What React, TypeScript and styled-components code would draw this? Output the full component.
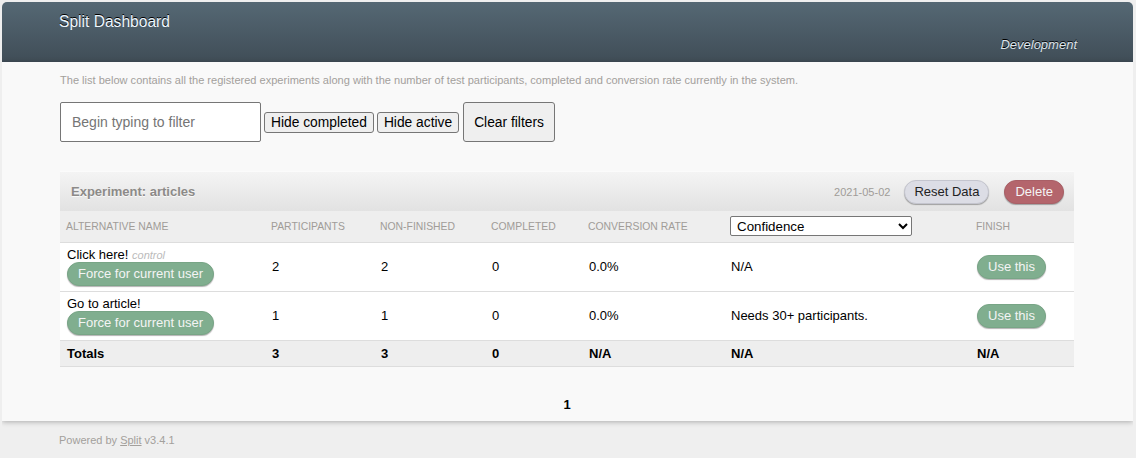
import React from "react";
import styled, { createGlobalStyle } from "styled-components";

const Global = createGlobalStyle`
  html { background: #efefef; }
  body {
    margin: 2px 3px 0 2px;
    font: 13px "Liberation Sans", Arial, sans-serif;
    color: #000;
  }
  * { box-sizing: border-box; }
`;

const Header = styled.div`
  height: 60px;
  padding: 0 56px 0 57px;
  display: flex;
  justify-content: space-between;
  align-items: flex-start;
  background: linear-gradient(to bottom, #556874 0%, #404d57 100%);
  border-radius: 5px 5px 0 0;
`;

const Title = styled.h1`
  margin: 0;
  color: #edf7ff;
  font-size: 15.6px;
  font-weight: normal;
  line-height: 40px;
  text-shadow: 0 -1px 0 #000;
`;

const Environment = styled.div`
  margin-top: 35px;
  color: #dfe7ee;
  font-size: 13px;
  font-style: italic;
  line-height: 16px;
  text-shadow: 0 -1px 0 #000;
`;

const Main = styled.div`
  background: #f9f9f9;
  padding: 0 59px 8px 58px;
  box-shadow: 0 1px 5px rgba(0, 0, 0, 0.28);
`;

const Intro = styled.p`
  margin: 0;
  padding-top: 12px;
  font-size: 11.05px;
  line-height: 13px;
  color: #a3a09c;
`;

const Filters = styled.div`
  margin-top: 15px;
  display: flex;
  align-items: center;
  gap: 3px;
`;

const FilterInput = styled.input`
  width: 201px;
  height: 40px;
  padding: 0 11px;
  border: 1px solid #767676;
  border-radius: 2px;
  font: 14px "Liberation Sans", Arial, sans-serif;
  background: #fff;
  &::placeholder { color: #757575; }
`;

const FormButton = styled.button<{ $tall?: boolean }>`
  height: ${(p) => (p.$tall ? "40px" : "21px")};
  padding: ${(p) => (p.$tall ? "0 10px" : "0 6px")};
  margin-left: ${(p) => (p.$tall ? "1px" : "0")};
  font: 13.8px "Liberation Sans", Arial, sans-serif;
  color: #000;
  background: #efefef;
  border: 1px solid #767676;
  border-radius: 3px;
`;

const Experiment = styled.div`
  margin: 29px 0 30px;
  background: #fff;
  border-top: 1px solid #fbfbfb;
`;

const ExpHeader = styled.div`
  display: flex;
  align-items: center;
  padding: 0 10px 0 11px;
  background: linear-gradient(to bottom, #f4f4f4 0%, #e2e2e2 100%);
`;

const ExpTitle = styled.h2`
  margin: 12px 0;
  flex: 1;
  font-size: 13px;
  line-height: 15px;
  font-weight: bold;
  color: #8c8a88;
  text-shadow: 0 1px 0 rgba(255, 255, 255, 0.8);
`;

const DateText = styled.span`
  font-size: 11px;
  color: #a09c98;
  margin-right: 14px;
`;

const Pill = styled.button<{ $kind: "green" | "gray" | "red" }>`
  display: inline-block;
  padding: ${(p) => (p.$kind === "gray" ? "4px 9px" : "4px 10px")};
  font: 13px/14px "Liberation Sans", Arial, sans-serif;
  border-radius: 12px;
  box-shadow: 0 1px 1px rgba(0, 0, 0, 0.3);
  color: ${(p) => (p.$kind === "gray" ? "#222" : "#f4f4f4")};
  background: ${(p) =>
    p.$kind === "green" ? "#80ae8f" : p.$kind === "red" ? "#b4656c" : "#dcdde5"};
  border: 1px solid
    ${(p) => (p.$kind === "green" ? "#78a586" : p.$kind === "red" ? "#a95f66" : "#c4c5ce")};
  & + & { margin-left: 15px; }
`;

const Table = styled.table`
  width: 100%;
  border-collapse: collapse;
  table-layout: fixed;
`;

const Th = styled.th`
  padding: 0 6px;
  height: 31px;
  text-align: left;
  font-weight: normal;
  font-size: 10.4px;
  text-transform: uppercase;
  color: #a09c98;
  background: #eee;
  border-bottom: 1px solid #ddd;
`;

const Td = styled.td`
  padding: 5px 6px 5px 7px;
  vertical-align: middle;
  line-height: 15px;
  border-bottom: 1px solid #ddd;
`;

const TotalTd = styled.td`
  padding: 5px 6px 5px 7px;
  line-height: 15px;
  font-weight: bold;
  background: #eee;
  border-bottom: 1px solid #ddd;
`;

const Name = styled.div`
  line-height: 14px;
`;

const Control = styled.span`
  font-size: 11px;
  font-style: italic;
  color: #bbb;
`;

const Select = styled.select`
  width: 182px;
  height: 20px;
  font: 13.33px "Liberation Sans", Arial, sans-serif;
  color: #000;
  background: #fff;
  border: 1px solid #767676;
  border-radius: 2px;
  padding: 0 2px;
`;

const Pagination = styled.div`
  text-align: center;
  font-weight: bold;
  line-height: 16px;
`;

const Footer = styled.p`
  margin: 12px 0 0;
  padding-left: 57px;
  font-size: 11px;
  line-height: 14px;
  color: #a3a09c;
  a { color: #a3a09c; }
`;

const cols = [205, 109, 111, 97, 142, 246, 104];

const rows = [
  { name: "Click here!", control: true, p: 2, nf: 2, c: 0, conv: "0.0%", conf: "N/A" },
  { name: "Go to article!", control: false, p: 1, nf: 1, c: 0, conv: "0.0%", conf: "Needs 30+ participants." },
];

export default function App() {
  return (
    <>
      <Global />
      <Header>
        <Title>Split Dashboard</Title>
        <Environment>Development</Environment>
      </Header>
      <Main>
        <Intro>
          The list below contains all the registered experiments along with the number of test
          participants, completed and conversion rate currently in the system.
        </Intro>
        <Filters>
          <FilterInput placeholder="Begin typing to filter" />
          <FormButton>Hide completed</FormButton>
          <FormButton>Hide active</FormButton>
          <FormButton $tall>Clear filters</FormButton>
        </Filters>
        <Experiment>
          <ExpHeader>
            <ExpTitle>Experiment: articles</ExpTitle>
            <DateText>2021-05-02</DateText>
            <Pill $kind="gray">Reset Data</Pill>
            <Pill $kind="red">Delete</Pill>
          </ExpHeader>
          <Table>
            <colgroup>
              {cols.map((w, i) => (
                <col key={i} style={{ width: w }} />
              ))}
            </colgroup>
            <thead>
              <tr>
                <Th>Alternative Name</Th>
                <Th>Participants</Th>
                <Th>Non-finished</Th>
                <Th>Completed</Th>
                <Th>Conversion Rate</Th>
                <Th>
                  <Select defaultValue="c">
                    <option value="c">Confidence</option>
                  </Select>
                </Th>
                <Th>Finish</Th>
              </tr>
            </thead>
            <tbody>
              {rows.map((r) => (
                <tr key={r.name}>
                  <Td>
                    <Name>
                      {r.name} {r.control && <Control>control</Control>}
                    </Name>
                    <Pill $kind="green">Force for current user</Pill>
                  </Td>
                  <Td>{r.p}</Td>
                  <Td>{r.nf}</Td>
                  <Td>{r.c}</Td>
                  <Td>{r.conv}</Td>
                  <Td>{r.conf}</Td>
                  <Td>
                    <Pill $kind="green">Use this</Pill>
                  </Td>
                </tr>
              ))}
              <tr>
                <TotalTd>Totals</TotalTd>
                <TotalTd>3</TotalTd>
                <TotalTd>3</TotalTd>
                <TotalTd>0</TotalTd>
                <TotalTd>N/A</TotalTd>
                <TotalTd>N/A</TotalTd>
                <TotalTd>N/A</TotalTd>
              </tr>
            </tbody>
          </Table>
        </Experiment>
        <Pagination>1</Pagination>
      </Main>
      <Footer>
        Powered by <a href="#">Split</a> v3.4.1
      </Footer>
    </>
  );
}
